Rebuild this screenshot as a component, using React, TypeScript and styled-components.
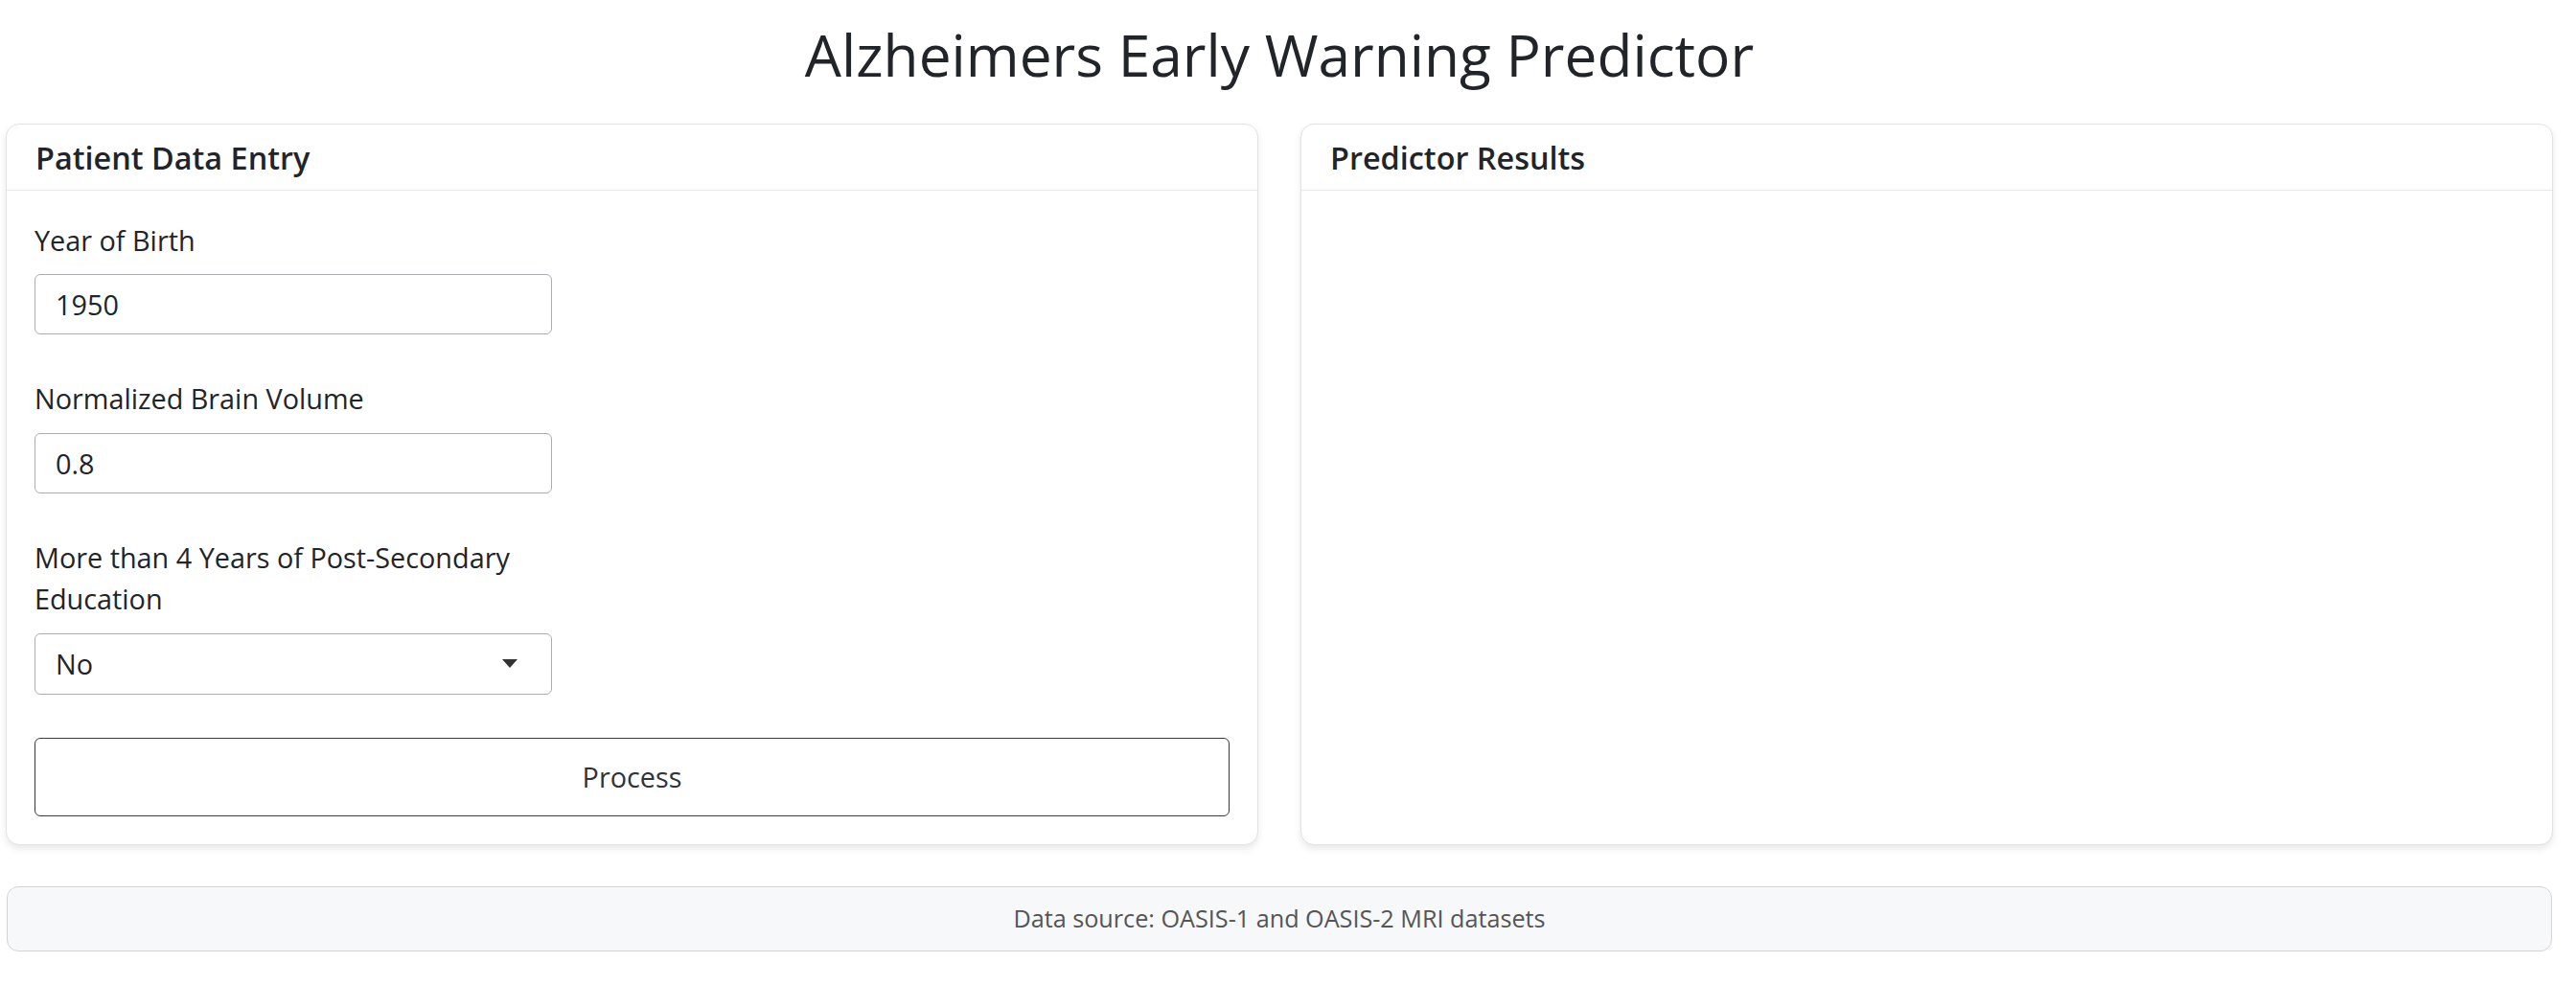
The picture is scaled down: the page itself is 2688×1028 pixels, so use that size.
import React from "react";
import styled, { createGlobalStyle } from "styled-components";

const GlobalStyle = createGlobalStyle`
  html, body {
    margin: 0;
    padding: 0;
    background: #ffffff;
  }
  body {
    font-family: "Open Sans", "Noto Sans", sans-serif;
    font-size: 28.8px;
    line-height: 1.5;
    color: #212529;
  }
  * { box-sizing: border-box; }
`;

const Page = styled.div`
  padding: 21px 24px 30px 6px;
  display: flex;
  flex-direction: column;
`;

const Title = styled.h1`
  margin: 0 0 36px 0;
  font-size: 60.4px;
  font-weight: 400;
  line-height: 1.2;
  text-align: center;
  color: #212529;
`;

const Columns = styled.div`
  display: grid;
  grid-template-columns: 1fr 1fr;
  gap: 44px;
  align-items: stretch;
`;

const Card = styled.section`
  display: flex;
  flex-direction: column;
  background: #fff;
  border: 1px solid #e3e3e3;
  border-radius: 14px;
  box-shadow: 0 3.6px 7.2px rgba(0, 0, 0, 0.09);
  overflow: hidden;
`;

const CardHeader = styled.header`
  padding: 14.5px 30px;
  font-size: 32.4px;
  font-weight: 600;
  line-height: 1.2;
  border-bottom: 1px solid #e9e9e9;
  color: #212529;
`;

const CardBody = styled.div`
  flex: 1;
  padding: 29.5px 29px 29.5px 29px;
  display: flex;
  flex-direction: column;
  gap: 45px;
`;

const Field = styled.div`
  display: flex;
  flex-direction: column;
  width: 540px;
`;

const Label = styled.label`
  display: block;
  margin-bottom: 14.4px;
  font-size: 28.8px;
  line-height: 43.2px;
  color: #212529;
`;

const TextInput = styled.input`
  height: 63px;
  width: 540px;
  padding: 0 21px;
  border: 1px solid #a9adb2;
  border-radius: 6px;
  font-family: inherit;
  font-size: 28.8px;
  color: #212529;
  background: #fff;
  outline: none;
`;

const SelectBox = styled.div`
  position: relative;
  height: 64px;
  width: 540px;
  border: 1px solid #a9adb2;
  border-radius: 6px;
  display: flex;
  align-items: center;
  padding: 0 21px;
  font-size: 28.8px;
  color: #212529;
  background: #fff;
`;

const Caret = styled.span`
  margin-left: auto;
  margin-right: 14px;
  width: 0;
  height: 0;
  border-left: 8px solid transparent;
  border-right: 8px solid transparent;
  border-top: 9px solid #333;
`;

const ProcessButton = styled.button`
  height: 82px;
  width: 100%;
  border: 1.5px solid #3a3a3a;
  border-radius: 6px;
  background: #fff;
  font-family: inherit;
  font-size: 28.8px;
  color: #333;
  cursor: pointer;
`;

const Footer = styled.footer`
  margin: 43px 1px 0 1px;
  height: 68px;
  display: flex;
  align-items: center;
  justify-content: center;
  background: #f7f8fa;
  border: 1.5px solid #d4d4d4;
  border-radius: 12px;
  font-size: 25.2px;
  color: #555;
`;

export default function App() {
  return (
    <>
      <GlobalStyle />
      <Page>
        <Title>Alzheimers Early Warning Predictor</Title>
        <Columns>
          <Card>
            <CardHeader>Patient Data Entry</CardHeader>
            <CardBody>
              <Field>
                <Label htmlFor="yob">Year of Birth</Label>
                <TextInput id="yob" defaultValue="1950" />
              </Field>
              <Field>
                <Label htmlFor="nbv">Normalized Brain Volume</Label>
                <TextInput id="nbv" defaultValue="0.8" />
              </Field>
              <Field>
                <Label>More than 4 Years of Post-Secondary Education</Label>
                <SelectBox>
                  No
                  <Caret />
                </SelectBox>
              </Field>
              <ProcessButton>Process</ProcessButton>
            </CardBody>
          </Card>
          <Card>
            <CardHeader>Predictor Results</CardHeader>
            <CardBody />
          </Card>
        </Columns>
        <Footer>Data source: OASIS-1 and OASIS-2 MRI datasets</Footer>
      </Page>
    </>
  );
}
